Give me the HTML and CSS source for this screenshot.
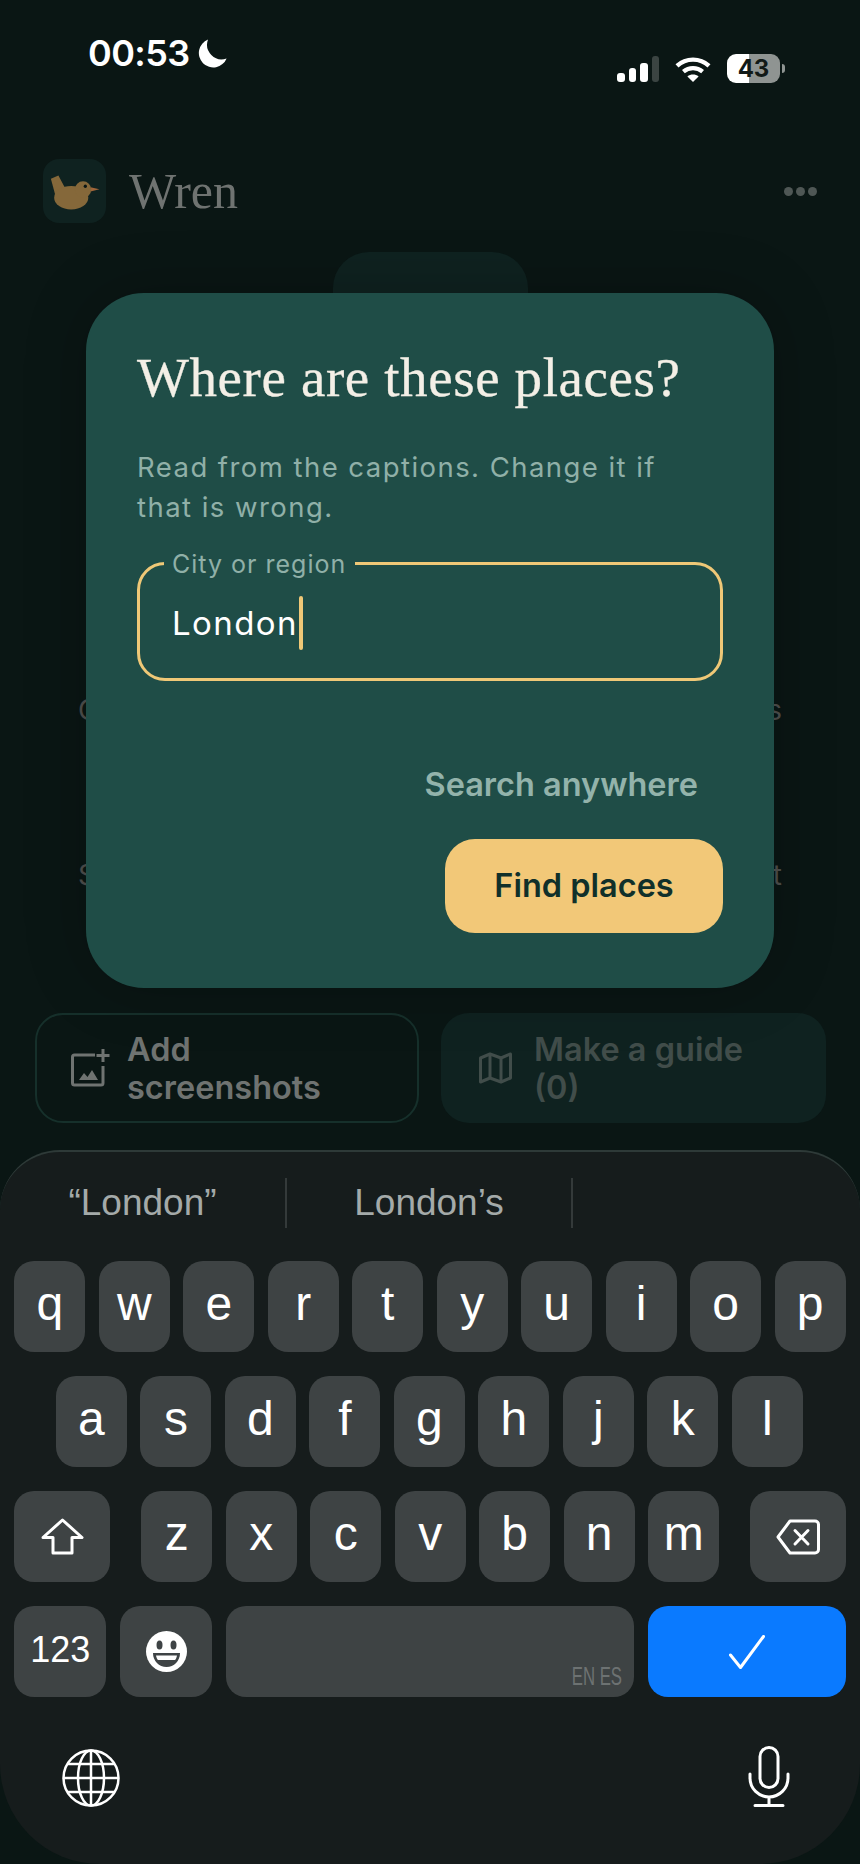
FILE: index.html
```html
<!DOCTYPE html>
<html>
<head>
    <meta charset="utf-8">
    <title>Wren</title>
    <meta name="viewport" content="width=device-width, initial-scale=1">
    <link rel="stylesheet" href="styles.css">
</head>
<body>
    <div class="telefon">
        <div class="status">
            <div class="status-lewo">
                <span class="czas">00:53</span>
                <svg class="ksiezyc" viewBox="0 0 30 29"><path d="M11 .6A14.4 14.4 0 1 0 29.6 19.4 14.6 14.6 0 0 1 11 .6Z" fill="#fff"/></svg>
            </div>
            <div class="status-prawo">
                <div class="sygnal">
                    <i class="b1"></i><i class="b2"></i><i class="b3"></i><i class="b4"></i>
                </div>
                <svg class="wifi" viewBox="0 0 36 26">
                    <path d="M2 9.8C11 1.6 25 1.6 34 9.8" fill="none" stroke="#fff" stroke-width="4.4"/>
                    <path d="M8.4 15.6C14 11 22 11 27.6 15.6" fill="none" stroke="#fff" stroke-width="4.4"/>
                    <path d="M18 26 12.4 20.4C15.6 17.8 20.4 17.8 23.6 20.4Z" fill="#fff"/>
                </svg>
                <div class="bateria">43</div>
                <div class="bateria-czubek"></div>
            </div>
        </div>

        <div class="naglowek">
            <div class="logo">
                <svg viewBox="0 0 188 195">
                    <path d="M143 86 170 92 143 99Z" fill="#a0653a"/>
                    <path d="M22 60 45 50 66 90 50 130 36 112Z" fill="#85683a"/>
                    <ellipse cx="84" cy="118" rx="52" ry="36" fill="#85683a"/>
                    <circle cx="120" cy="93" r="25" fill="#85683a"/>
                    <circle cx="127" cy="83" r="5" fill="#0a1614"/>
                </svg>
            </div>
            <span class="nazwa">Wren</span>
            <div class="kropki"><i></i><i></i><i></i></div>
        </div>

        <div class="zakladka"></div>

        <div class="tlo-tekst pierwszy"><span>G</span><span>s</span></div>
        <div class="tlo-tekst drugi"><span>S</span><span>t</span></div>

        <div class="akcje">
            <div class="akcja obrys">
                <svg class="ikona-dodaj" viewBox="0 0 39 38" fill="none" stroke="#6f7371" stroke-width="3">
                    <path d="M24 6H3.5A2 2 0 0 0 1.5 8V34A2 2 0 0 0 3.5 36H30A2 2 0 0 0 32 34V17"/>
                    <path d="M32 0V13M25.500 6.500H38.500"/>
                    <path d="M8 31 13 24 16.500 28 21 21 27 31Z" fill="#6f7371" stroke="none"/>
                </svg>
                <span class="akcja-tekst">Add<br>screenshots</span>
            </div>
            <div class="akcja wylaczona">
                <svg class="ikona-mapa" viewBox="0 0 33 32" fill="none" stroke="#414d4a" stroke-width="3" stroke-linejoin="round">
                    <path d="M1.500 6 11 2 22 6 31.500 2V26L22 30 11 26 1.500 30Z"/>
                    <path d="M11 2V26M22 6V30"/>
                </svg>
                <span class="akcja-tekst">Make a guide<br>(0)</span>
            </div>
        </div>

        <div class="klawiatura">
            <div class="podpowiedzi">
                <div class="podpowiedz">“London”</div>
                <div class="podpowiedz">London’s</div>
                <div class="podpowiedz"></div>
            </div>
            <div class="rzad">
                <div class="klawisz">q</div><div class="klawisz">w</div><div class="klawisz">e</div><div class="klawisz">r</div><div class="klawisz">t</div><div class="klawisz">y</div><div class="klawisz">u</div><div class="klawisz">i</div><div class="klawisz">o</div><div class="klawisz">p</div>
            </div>
            <div class="rzad srodek">
                <div class="klawisz">a</div><div class="klawisz">s</div><div class="klawisz">d</div><div class="klawisz">f</div><div class="klawisz">g</div><div class="klawisz">h</div><div class="klawisz">j</div><div class="klawisz">k</div><div class="klawisz">l</div>
            </div>
            <div class="rzad trzeci">
                <div class="klawisz szeroki">
                    <svg class="shift" viewBox="0 0 43 37" fill="none" stroke="#fff" stroke-width="3" stroke-linejoin="round"><path d="M21.500 2 41 19.500H31V35H12V19.500H2Z"/></svg>
                </div>
                <div class="litery">
                    <div class="klawisz">z</div><div class="klawisz">x</div><div class="klawisz">c</div><div class="klawisz">v</div><div class="klawisz">b</div><div class="klawisz">n</div><div class="klawisz">m</div>
                </div>
                <div class="klawisz szeroki">
                    <svg class="kasuj" viewBox="0 0 44 36" fill="none" stroke="#fff" stroke-width="3" stroke-linejoin="round"><path d="M14 2H39A3.500 3.500 0 0 1 42.500 5.500V30.500A3.500 3.500 0 0 1 39 34H14L2 18Z"/><path d="M19 11.500 32 25M32 11.500 19 25" stroke-linecap="round"/></svg>
                </div>
            </div>
            <div class="rzad">
                <div class="klawisz numery">123</div>
                <div class="klawisz emotka">
                    <svg viewBox="0 0 41 41"><circle cx="20.500" cy="20.500" r="20.500" fill="#fff"/><ellipse cx="13.500" cy="14" rx="3" ry="4.500" fill="#3e4345"/><ellipse cx="27.500" cy="14" rx="3" ry="4.500" fill="#3e4345"/><path d="M7 22H34C34 30 28 36 20.500 36S7 30 7 22Z" fill="#3e4345"/><path d="M10 24.500H31C30.500 27 30 28 29 29H12C11 28 10.500 27 10 24.500Z" fill="#fff"/></svg>
                </div>
                <div class="klawisz spacja"><span class="jezyki">EN ES</span></div>
                <div class="klawisz gotowe">
                    <svg class="ptaszek" viewBox="0 0 36 34" fill="none" stroke="#fff" stroke-width="3" stroke-linecap="round" stroke-linejoin="round"><path d="M1.500 20 11.500 32.500 34.500 1.500"/></svg>
                </div>
            </div>
            <div class="dol">
                <svg class="globus" viewBox="0 0 58 58" fill="none" stroke="#fff" stroke-width="2.500">
                    <circle cx="29" cy="29" r="27.500"/>
                    <ellipse cx="29" cy="29" rx="13" ry="27.500"/>
                    <path d="M29 1.500V56.500M1.500 29H56.500M5.500 15H52.500M5.500 43H52.500"/>
                </svg>
                <svg class="mikrofon" viewBox="0 0 42 61" fill="none" stroke="#fff" stroke-width="3" stroke-linecap="round">
                    <rect x="12" y="1.500" width="18" height="40" rx="9"/>
                    <path d="M2 28V32A19 19 0 0 0 40 32V28M21 51V59M7 59.500H35"/>
                </svg>
            </div>
        </div>

        <div class="okno">
            <h1>Where are these places?</h1>
            <p>Read from the captions. Change it if<br>that is wrong.</p>
            <div class="pole">
                <span class="etykieta">City or region</span>
                <span class="wartosc">London</span><span class="kursor"></span>
            </div>
            <div class="szukaj">Search anywhere</div>
            <div class="znajdz">Find places</div>
        </div>
    </div>
</body>
</html>
```

FILE: styles.css
```css
html, body {
    margin: 0;
    height: 100%;
    background-color: #0a1614;
}

.telefon {
    position: relative;
    display: flex;
    flex-direction: column;
    width: 860px;
    height: 1864px;
    overflow: hidden;
    background-color: #0a1614;
    font-family: "Inter", "Liberation Sans", sans-serif;
}

/* pasek statusu */
.status {
    display: flex;
    justify-content: space-between;
    height: 159px;
    padding: 0 75px 0 88px;
    box-sizing: border-box;
}

.status-lewo {
    display: flex;
    align-items: flex-start;
    gap: 7px;
    padding-top: 33px;
}

.czas {
    color: white;
    font-size: 36px;
    font-weight: 600;
    line-height: 41px;
    letter-spacing: -0.6px;
}

.ksiezyc {
    width: 30px;
    height: 29px;
    margin-top: 6px;
}

.status-prawo {
    display: flex;
    align-items: flex-start;
    padding-top: 54px;
}

.sygnal {
    display: flex;
    align-items: flex-end;
    gap: 4px;
    height: 26px;
    margin-top: 2px;
    margin-right: 16px;
}

.sygnal i {
    width: 7.5px;
    border-radius: 3px;
    background-color: white;
}

.sygnal .b1 { height: 9px; }
.sygnal .b2 { height: 14.500px; }
.sygnal .b3 { height: 19.500px; }
.sygnal .b4 { height: 26px; background-color: #3b4442; }

.wifi {
    width: 36px;
    height: 26px;
    margin-top: 2px;
    margin-right: 16px;
}

.bateria {
    width: 53px;
    height: 29px;
    border-radius: 9px;
    background: linear-gradient(90deg, white 0 42%, #8f9492 42%);
    color: #111917;
    font-size: 24px;
    font-weight: 700;
    line-height: 29px;
    text-align: center;
}

.bateria-czubek {
    width: 3px;
    height: 9px;
    margin: 10px 0 0 2px;
    border-radius: 0 3px 3px 0;
    background-color: #8f9492;
}

/* naglowek */
.naglowek {
    display: flex;
    align-items: center;
    height: 64px;
    padding: 0 43px;
}

.logo {
    width: 63px;
    height: 64px;
    border-radius: 16px;
    background-color: #0f2220;
}

.logo svg {
    display: block;
    width: 63px;
    height: 64px;
}

.nazwa {
    margin-left: 23px;
    color: #6f7371;
    font-family: "Liberation Serif", serif;
    font-size: 50px;
}

.kropki {
    display: flex;
    gap: 3px;
    margin-left: auto;
}

.kropki i {
    width: 9px;
    height: 9px;
    border-radius: 50%;
    background-color: #4f5755;
}

.zakladka {
    width: 195px;
    height: 90px;
    margin: 29px 0 0 333px;
    border-radius: 36px 36px 0 0;
    background-color: #0f2220;
}

.tlo-tekst {
    display: flex;
    justify-content: space-between;
    height: 40px;
    padding: 0 78px;
    color: #50514f;
    font-size: 28px;
    line-height: 40px;
}

.pierwszy { margin-top: 348px; }
.drugi { margin-top: 125px; }

/* przyciski pod oknem */
.akcje {
    display: flex;
    gap: 22px;
    margin: 118px 0 0 35px;
}

.akcja {
    display: flex;
    align-items: center;
    gap: 17px;
    width: 384px;
    height: 110px;
    padding-left: 34px;
    box-sizing: border-box;
    border-radius: 28px;
    font-size: 32.500px;
    font-weight: 600;
    line-height: 38px;
}

.akcja-tekst {
    padding-top: 2px;
}

.obrys {
    border: 2px solid #16302b;
    color: #6f7371;
}

.wylaczona {
    width: 385px;
    gap: 22px;
    padding-left: 38px;
    background-color: #0f2220;
    color: #414d4a;
}

.ikona-dodaj {
    width: 39px;
    height: 38px;
}

.ikona-mapa {
    width: 33px;
    height: 32px;
}

/* klawiatura */
.klawiatura {
    flex: 1;
    margin-top: 27px;
    padding-top: 26px;
    border-top: 2px solid #2e3a38;
    border-radius: 60px 60px 100px 100px;
    background-color: #161c1c;
}

.podpowiedzi {
    display: grid;
    grid-template-columns: 285px 286px 289px;
    height: 50px;
    margin-bottom: 33px;
}

.podpowiedz {
    color: #a4aaa9;
    font-family: "Liberation Sans", sans-serif;
    font-size: 37px;
    line-height: 50px;
    text-align: center;
}

.podpowiedz + .podpowiedz {
    border-left: 2px solid #343a3a;
}

.rzad {
    display: flex;
    gap: 13.700px;
    height: 91.300px;
    margin: 0 14px 23.700px 14.400px;
}

.srodek {
    margin-left: 56px;
}

.trzeci {
    justify-content: space-between;
}

.litery {
    display: flex;
    gap: 13.700px;
}

.klawisz {
    display: flex;
    align-items: center;
    justify-content: center;
    width: 70.800px;
    height: 91.300px;
    border-radius: 20px;
    background-color: #3e4344;
    color: white;
    font-family: "Liberation Sans", sans-serif;
    font-size: 48px;
    padding-bottom: 6px;
    box-sizing: border-box;
}

.szeroki {
    width: 96px;
    padding-bottom: 0;
}

.numery {
    width: 92px;
    font-size: 36px;
    padding-bottom: 3px;
}

.emotka {
    width: 92px;
    padding-bottom: 0;
}

.emotka svg {
    width: 41px;
    height: 41px;
}

.spacja {
    position: relative;
    width: 409px;
}

.jezyki {
    position: absolute;
    right: 12px;
    bottom: 6px;
    color: #6d7272;
    font-size: 25px;
    transform: scaleX(0.67);
    transform-origin: right center;
}

.gotowe {
    width: 198px;
    background-color: #0a7aff;
    padding-bottom: 0;
}

.shift {
    width: 43px;
    height: 37px;
}

.kasuj {
    width: 44px;
    height: 36px;
}

.ptaszek {
    width: 36px;
    height: 34px;
}

.dol {
    display: flex;
    justify-content: space-between;
    align-items: flex-end;
    margin-top: 49px;
    padding: 0 70px 0 62px;
}

.globus {
    width: 58px;
    height: 58px;
}

.mikrofon {
    width: 42px;
    height: 61px;
}

/* okno dialogowe */
.okno {
    position: absolute;
    left: 86px;
    top: 293px;
    display: flex;
    flex-direction: column;
    width: 688px;
    height: 695px;
    padding: 0 51px;
    box-sizing: border-box;
    border-radius: 58px;
    background-color: #1f4d47;
    box-shadow: 0 0 60px rgba(0, 0, 0, 0.25);
}

.okno h1 {
    margin: 54px 0 0;
    color: #f3efe6;
    font-family: "Liberation Serif", serif;
    font-size: 55px;
    font-weight: 400;
    line-height: 62px;
    letter-spacing: 0.6px;
    -webkit-text-stroke: 0.3px #f3efe6;
}

.okno p {
    margin: 38px 0 0;
    color: #90b0a8;
    font-size: 27.500px;
    line-height: 40px;
    letter-spacing: 1.45px;
}

.pole {
    position: relative;
    display: flex;
    align-items: center;
    height: 119px;
    margin-top: 34.500px;
    padding-left: 32px;
    padding-top: 4px;
    box-sizing: border-box;
    border: 3px solid #efc877;
    border-radius: 28px;
}

.etykieta {
    position: absolute;
    left: 24px;
    top: -13px;
    padding: 0 9px 0 8px;
    background-color: #1f4d47;
    color: #90b0a8;
    font-size: 25px;
    line-height: 24px;
    letter-spacing: 1px;
}

.wartosc {
    color: white;
    font-size: 33px;
    letter-spacing: 1.400px;
}

.kursor {
    width: 4px;
    height: 54px;
    margin-left: 1px;
    border-radius: 2px;
    background-color: #efc877;
}

.szukaj {
    align-self: flex-end;
    margin: 84px 25px 0 0;
    color: #93b3ab;
    font-size: 32.500px;
    font-weight: 600;
    line-height: 40px;
}

.znajdz {
    align-self: flex-end;
    width: 278px;
    height: 94px;
    margin-top: 34px;
    border-radius: 30px;
    background-color: #f2c878;
    color: #10302a;
    font-size: 32.500px;
    font-weight: 600;
    line-height: 94px;
    text-align: center;
}
```
